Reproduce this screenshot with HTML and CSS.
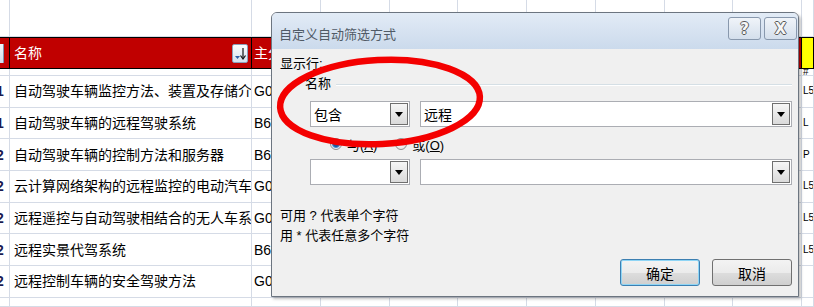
FILE: index.html
```html
<!DOCTYPE html>
<html lang="zh-CN">
<head>
    <meta charset="UTF-8">
    <meta name="viewport" content="width=device-width, initial-scale=1.0">
    <title>自定义自动筛选方式</title>
    <link rel="stylesheet" href="styles.css">
</head>
<body>
    <div class="sheet">
        <div class="row r-top">
            <span></span><span></span><span></span><span></span><span></span><span></span><span></span><span></span><span></span><span></span><span></span>
        </div>
        <div class="row r-head">
            <span class="ca"><i class="flt-edge"></i></span>
            <span class="cb">名称
                <i class="flt">
                    <svg width="14" height="17" viewBox="0 0 14 17">
                        <path d="M2 11h5l-2.5 3z" fill="#2d5fa8"/>
                        <path d="M10 3v10" stroke="#111" stroke-width="1.2"/>
                        <path d="M7.5 10.5l2.5 3.5 2.5-3.5" fill="none" stroke="#111" stroke-width="1.2"/>
                    </svg>
                </i>
            </span>
            <span class="cc">主分类号</span>
            <span></span><span></span><span></span><span></span><span></span><span></span><span></span>
            <span class="ck"></span>
        </div>
        <div class="row r-gap">
            <span></span><span></span><span></span><span></span><span></span><span></span><span></span><span></span><span></span><span></span><span class="ck">#</span>
        </div>
        <div class="row">
            <span class="ca">1</span><span class="cb">自动驾驶车辆监控方法、装置及存储介质</span><span class="cc">G06Q</span>
            <span></span><span></span><span></span><span></span><span></span><span></span><span></span><span class="ck">L5</span>
        </div>
        <div class="row">
            <span class="ca">1</span><span class="cb">自动驾驶车辆的远程驾驶系统</span><span class="cc">B60W</span>
            <span></span><span></span><span></span><span></span><span></span><span></span><span></span><span class="ck">L</span>
        </div>
        <div class="row">
            <span class="ca">2</span><span class="cb">自动驾驶车辆的控制方法和服务器</span><span class="cc">B60W</span>
            <span></span><span></span><span></span><span></span><span></span><span></span><span></span><span class="ck">P</span>
        </div>
        <div class="row">
            <span class="ca">2</span><span class="cb">云计算网络架构的远程监控的电动汽车</span><span class="cc">G05D</span>
            <span></span><span></span><span></span><span></span><span></span><span></span><span></span><span class="ck">L5</span>
        </div>
        <div class="row">
            <span class="ca">2</span><span class="cb">远程遥控与自动驾驶相结合的无人车系统</span><span class="cc">G05D</span>
            <span></span><span></span><span></span><span></span><span></span><span></span><span></span><span class="ck">L5</span>
        </div>
        <div class="row">
            <span class="ca">2</span><span class="cb">远程实景代驾系统</span><span class="cc">B60W</span>
            <span></span><span></span><span></span><span></span><span></span><span></span><span></span><span class="ck">L5</span>
        </div>
        <div class="row">
            <span class="ca">2</span><span class="cb">远程控制车辆的安全驾驶方法</span><span class="cc">G05D</span>
            <span></span><span></span><span></span><span></span><span></span><span></span><span></span><span class="ck"></span>
        </div>
        <div class="row r-end">
            <span></span><span></span><span></span><span></span><span></span><span></span><span></span><span></span><span></span><span></span><span></span>
        </div>
    </div>

    <div class="dlg">
        <div class="dlg-title">
            <span class="dlg-name">自定义自动筛选方式</span>
            <div class="tbtns">
                <button class="tbtn">?</button>
                <button class="tbtn">X</button>
            </div>
        </div>
        <div class="dlg-body">
            <div class="lbl">显示行:</div>
            <div class="grp">
                <div class="grp-head"><span>名称</span><i class="grp-line"></i></div>
                <div class="crow">
                    <div class="combo op"><span>包含</span><i class="dd"></i></div>
                    <div class="combo val"><span>远程</span><i class="dd"></i></div>
                </div>
                <div class="radios">
                    <label class="rad"><i class="dot on"></i><span>与(<u>A</u>)</span></label>
                    <label class="rad"><i class="dot"></i><span>或(<u>O</u>)</span></label>
                </div>
                <div class="crow crow2">
                    <div class="combo op"><span></span><i class="dd"></i></div>
                    <div class="combo val"><span></span><i class="dd"></i></div>
                </div>
            </div>
            <div class="help">
                <p>可用 ? 代表单个字符</p>
                <p>用 * 代表任意多个字符</p>
            </div>
            <div class="acts">
                <button class="btn ok">确定</button>
                <button class="btn">取消</button>
            </div>
        </div>
    </div>

    <svg class="mark" width="216" height="100" viewBox="0 0 216 100">
        <ellipse cx="108" cy="48" rx="100" ry="42" transform="rotate(-3 108 48)" fill="none" stroke="#f40000" stroke-width="6.5"/>
    </svg>
</body>
</html>
```

FILE: styles.css
```css
html, body {
    overflow: hidden;
}
body {
    margin: 0;
    width: 814px;
    height: 307px;
    background: #fff;
    position: relative;
    font-family: "Liberation Sans", "Noto Sans CJK SC", sans-serif;
}

/* sheet */
.sheet {
    height: 307px;
    overflow: hidden;
}
.row {
    display: grid;
    grid-template-columns: 10px 242px repeat(8, 68.75px) 12px;
    height: 31.7px;
}
.row > span {
    box-sizing: border-box;
    border-right: 1px solid #d5dbe6;
    border-bottom: 1px solid #d5dbe6;
    overflow: hidden;
    white-space: nowrap;
    display: flex;
    align-items: center;
    font-size: 14px;
    line-height: 16px;
    color: #000;
}
.r-top { height: 37px; }
.r-gap { height: 7px; }
.r-end { height: 9px; }
.r-head { height: 32px; }
.r-head > span {
    background: #c00000;
    color: #fff;
    border-top: 1px solid #000;
    border-bottom: 1px solid #000;
    border-right: 1px solid #000;
}
.r-head > .ck { background: #ffff00; }
.row > span.ca {
    color: #1a1a50;
    font-weight: bold;
    text-indent: -4px;
}
.cb { padding-left: 4px; }
.cc { padding-left: 2px; }
.row > .ck {
    padding-left: 1px;
    font-size: 10px;
}
.flt-edge {
    align-self: center;
    width: 3px;
    height: 19px;
    margin-right: auto;
    background: linear-gradient(#f4f7fb, #cfdaea);
    border-right: 1px solid #7d93b0;
}
.flt {
    margin-left: auto;
    margin-right: 3px;
    width: 16px;
    height: 19px;
    box-sizing: border-box;
    border: 1px solid #8c9fba;
    border-radius: 2px;
    background: linear-gradient(#fbfcfe, #d6e0ee);
    display: flex;
}

/* dialog */
.dlg {
    position: absolute;
    left: 271px;
    top: 12px;
    width: 528px;
    height: 285px;
    box-sizing: border-box;
    border: 1px solid #6c7580;
    border-radius: 6px 6px 0 0;
    background: #f0f0f0;
    box-shadow: 2px 2px 3px rgba(0, 0, 0, 0.25);
    display: flex;
    flex-direction: column;
    font-family: "Liberation Sans", "Noto Sans CJK SC", sans-serif;
    font-size: 13px;
    color: #000;
}
.dlg-title {
    height: 32px;
    display: flex;
    justify-content: space-between;
    align-items: flex-start;
    padding: 4px 1px 0 7px;
    background: linear-gradient(#e2ebf6, #cbdaec);
    border-radius: 5px 5px 0 0;
}
.dlg-name {
    margin-top: 10px;
    line-height: 16px;
    color: #505a66;
}
.tbtns {
    display: flex;
    gap: 3px;
}
.tbtn {
    width: 33px;
    height: 23px;
    padding: 0;
    border: 1px solid #8898ad;
    border-radius: 3px;
    background: linear-gradient(#f0f4f9, #d4dfec);
    font: bold 15px "DejaVu Sans", sans-serif;
    color: #f6f6f6;
    text-shadow: 1px 0 #5a5a5a, -1px 0 #5a5a5a, 0 1px #5a5a5a, 0 -1px #5a5a5a;
}
.dlg-body {
    flex: 1;
    display: flex;
    flex-direction: column;
    padding: 7px 6px 0 8px;
}
.lbl { line-height: 16px; }
.grp { margin: 4px 0 0 25px; }
.grp-head {
    display: flex;
    align-items: center;
    gap: 5px;
    line-height: 16px;
}
.grp-line {
    flex: 1;
    height: 1px;
    background: #d5dfe5;
    box-shadow: 0 1px #fff;
}
.crow {
    display: flex;
    gap: 10px;
    margin: 9px 0 0 5px;
}
.crow2 { margin-top: 6px; }
.combo {
    height: 26px;
    box-sizing: border-box;
    border: 1px solid #abadb3;
    background: #fff;
    display: flex;
    align-items: center;
    justify-content: space-between;
    padding-left: 3px;
    font-size: 14px;
}
.op { width: 100px; }
.val { flex: 1; }
.dd {
    width: 18px;
    height: 22px;
    margin-right: 1px;
    box-sizing: border-box;
    border: 1px solid #6f6f6f;
    background: linear-gradient(#f6f6f6, #dadada);
    display: flex;
    align-items: center;
    justify-content: center;
}
.dd::after {
    content: "";
    border-left: 4px solid transparent;
    border-right: 4px solid transparent;
    border-top: 5px solid #000;
}
.radios {
    display: flex;
    align-items: center;
    height: 18px;
    margin: 8px 0 0 25px;
}
.rad {
    display: flex;
    align-items: center;
    gap: 5px;
    margin-right: 18px;
}
.dot {
    width: 12px;
    height: 12px;
    box-sizing: border-box;
    border: 1px solid #8e8f8f;
    border-radius: 50%;
    background: radial-gradient(circle, #fff, #dcdcdc);
}
.dot.on {
    background: radial-gradient(circle, #1e5a9c 0 2.5px, #4b8fd0 3.5px, #e8eef5 4.5px);
}
.help {
    margin-top: 21px;
    line-height: 20px;
}
.help p { margin: 0; }
.acts {
    display: flex;
    justify-content: flex-end;
    gap: 12px;
    margin-top: 13px;
}
.btn {
    width: 80px;
    height: 27px;
    border: 1px solid #707070;
    border-radius: 3px;
    background: linear-gradient(#f3f3f3 0%, #ebebeb 50%, #dddddd 51%, #cfcfcf 100%);
    font-family: "Noto Sans CJK SC", sans-serif;
    font-size: 14px;
    color: #000;
    padding: 0;
}
.ok {
    border-color: #3c7fb1;
    box-shadow: inset 0 0 0 1px #8fd5f5;
}

.mark {
    position: absolute;
    left: 272px;
    top: 54px;
    pointer-events: none;
}
```
